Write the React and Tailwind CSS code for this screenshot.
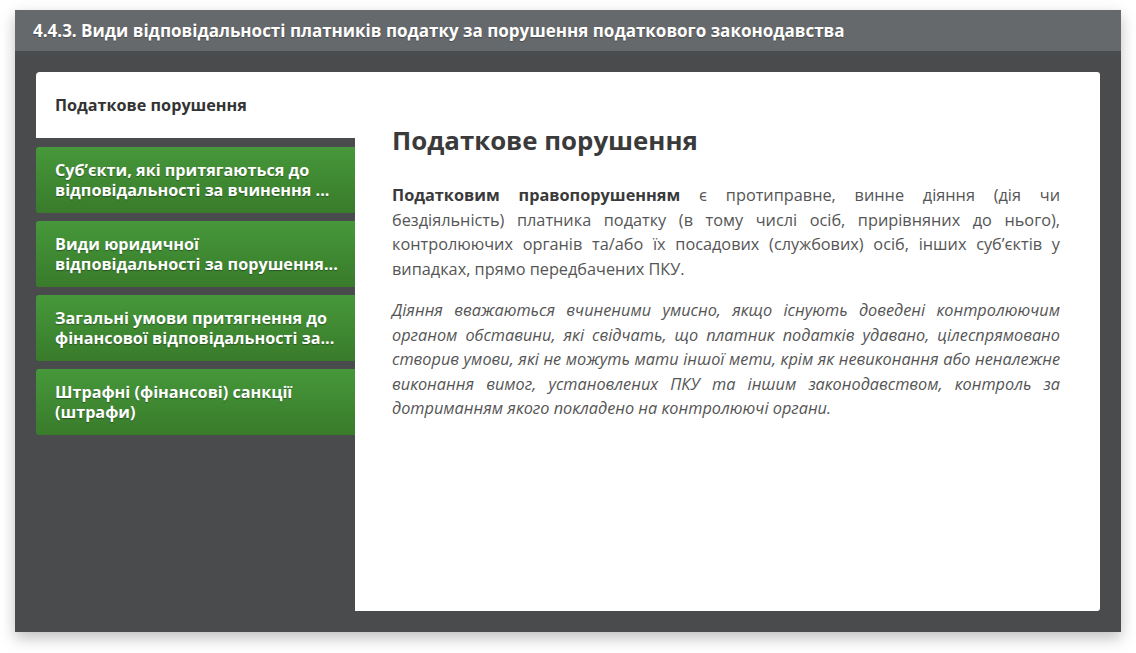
const tabs = [
  'Суб’єкти, які притягаються до відповідальності за вчинення ...',
  'Види юридичної відповідальності за порушення...',
  'Загальні умови притягнення до фінансової відповідальності за...',
  'Штрафні (фінансові) санкції (штрафи)',
]

function Tab({ label }) {
  return (
    <div className="flex h-[66px] items-center rounded-l-[3px] bg-gradient-to-b from-[#46983a] to-[#397b2b] pl-[19px] pr-[14px] text-[16.2px] font-bold leading-[20px] text-white [text-shadow:0_1px_1px_rgba(0,0,0,0.35)]">
      <span>{label}</span>
    </div>
  )
}

export default function App() {
  return (
    <div className="min-h-[653px] bg-white pl-[15px] pt-[10px] font-['Open_Sans',sans-serif]">
      <div className="flex h-[622px] w-[1106px] flex-col bg-[#4a4b4d] shadow-[0_6px_14px_rgba(0,0,0,0.25)]">
        <header className="flex h-[41px] items-center bg-[#66696c] pl-[18px] text-[17px] font-bold text-white [text-shadow:0_1px_1px_rgba(0,0,0,0.3)]">
          4.4.3. Види відповідальності платників податку за порушення податкового законодавства
        </header>

        <div className="flex flex-1 px-[21px] pb-[21px] pt-[21px]">
          <div className="flex w-[319px] flex-col">
            <div className="flex h-[66px] items-center rounded-tl-[4px] bg-white pl-[19px] text-[16.2px] font-bold text-[#333]">
              Податкове порушення
            </div>
            <div className="mt-[9px] flex flex-col gap-[8px]">
              {tabs.map((t) => (
                <Tab key={t} label={t} />
              ))}
            </div>
          </div>

          <main className="flex-1 rounded-r-[3px] bg-white pl-[37px] pr-[40px] pt-[52px]">
            <h1 className="text-[25.8px] font-bold leading-[32px] text-[#3a3a3a]">Податкове порушення</h1>
            <p className="mt-[27px] text-justify text-[16.3px] leading-[24.5px] text-[#555]">
              <b className="text-[#3a3a3a]">Податковим правопорушенням</b> є протиправне, винне діяння (дія чи
              бездіяльність) платника податку (в тому числі осіб, прирівняних до нього), контролюючих органів
              та/або їх посадових (службових) осіб, інших суб’єктів у випадках, прямо передбачених ПКУ.
            </p>
            <p className="mt-[17px] text-justify text-[16.3px] italic leading-[24.5px] text-[#555]">
              Діяння вважаються вчиненими умисно, якщо існують доведені контролюючим органом обставини, які
              свідчать, що платник податків удавано, цілеспрямовано створив умови, які не можуть мати іншої
              мети, крім як невиконання або неналежне виконання вимог, установлених ПКУ та іншим
              законодавством, контроль за дотриманням якого покладено на контролюючі органи.
            </p>
          </main>
        </div>
      </div>
    </div>
  )
}
